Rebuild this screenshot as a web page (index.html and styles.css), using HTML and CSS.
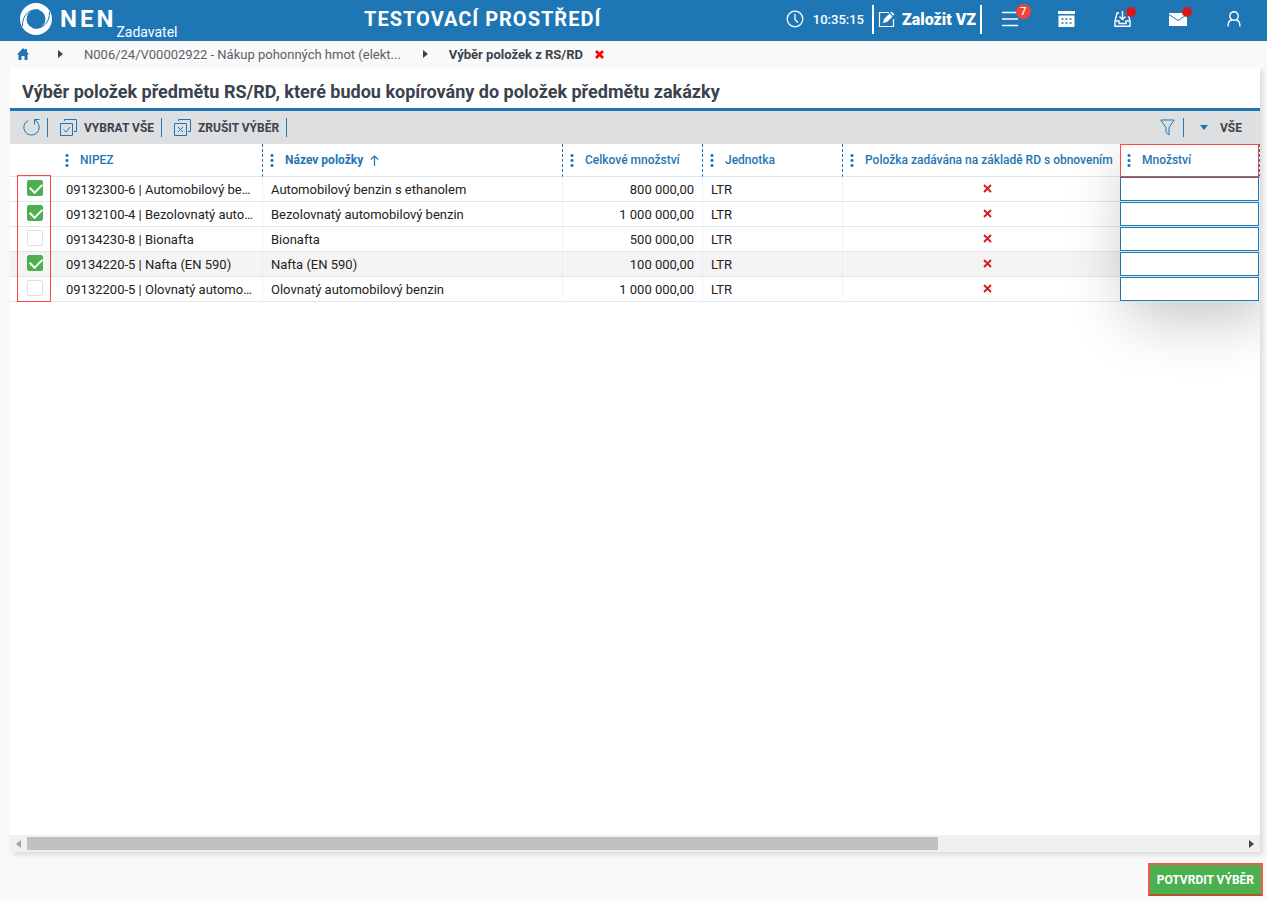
FILE: index.html
```html
<!DOCTYPE html>
<html lang="cs">
<head>
<meta charset="UTF-8" />
<meta name="viewport" content="width=device-width, initial-scale=1" />
<title>NEN - Výběr položek z RS/RD</title>
<link rel="stylesheet" href="styles.css">
</head>
<body>

<header class="topbar">
  <a class="brand" href="#">
    <svg class="brand-logo" width="32" height="32" viewBox="0 0 32 32">
      <path fill="#fff" fill-rule="evenodd" d="M16 0a16 16 0 1 1 0 32a16 16 0 1 1 0-32zM16 6.500a9.500 9.500 0 1 0 0 19a9.500 9.500 0 1 0 0-19z"/>
      <path fill="none" stroke="#1e76b5" stroke-width="1" d="M2.500 23C2 13 9 5 19 7M29.500 9C30 19 23 27 13 25"/>
    </svg>
    <span class="brand-name">NEN</span>
    <span class="brand-role">Zadavatel</span>
  </a>
  <div class="env">TESTOVACÍ PROSTŘEDÍ</div>
  <div class="clock">
    <svg width="18" height="18" viewBox="0 0 18 18" fill="none" stroke="#fff" stroke-width="1.3"><circle cx="9" cy="9" r="7.800"/><path d="M9 4v5.500l3 3"/></svg>
    <span>10:35:15</span>
  </div>
  <button class="create">
    <svg width="17" height="17" viewBox="0 0 17 17"><path fill="none" stroke="#fff" stroke-width="1.200" d="M11 1.500H1.500v14h14V8"/><path fill="#fff" d="M5 12l1-4 5.500-5.500 3 3L9 11zM12.300 1.700L13.500.5l3 3-1.200 1.200z"/></svg>
    Založit VZ
  </button>
  <nav class="icons">
    <button aria-label="Menu">
      <svg width="18" height="16" viewBox="0 0 18 16" stroke="#fff" stroke-width="1.600"><path d="M1 1.500h16M1 8h16M1 14.500h16"/></svg>
      <span class="badge">7</span>
    </button>
    <button aria-label="Kalendář">
      <svg width="17" height="16" viewBox="0 0 17 16"><path fill="#fff" d="M0 0h17v3H0zM.5 4.500h16V16H.5z"/><path stroke="#1e76b5" stroke-width="1.500" stroke-dasharray="2 2" d="M3.500 8h10M3.500 12h10"/></svg>
    </button>
    <button aria-label="Doručené">
      <svg width="17" height="16" viewBox="0 0 17 16" fill="none" stroke="#fff" stroke-width="1.400"><path d="M5 2H3L1 10v5.300h15V10l-2-8h-2M1 10h4v2.500h7V10h4M8.500 0v8M5.500 5.500l3 3 3-3"/></svg>
      <span class="dot"></span>
    </button>
    <button aria-label="Zprávy">
      <svg width="18" height="13" viewBox="0 0 18 13"><path fill="#fff" d="M0 0h18v13H0z"/><path fill="none" stroke="#1e76b5" d="M0 1.500l9 6 9-6"/></svg>
      <span class="dot"></span>
    </button>
    <button aria-label="Uživatel">
      <svg width="14" height="16" viewBox="0 0 14 16" fill="none" stroke="#fff" stroke-width="1.400"><circle cx="7" cy="5" r="4.200"/><path d="M1 15.500c0-4 2-6.300 4-6.700M13 15.500c0-4-2-6.300-4-6.700"/></svg>
    </button>
  </nav>
</header>

<nav class="crumbs">
  <a class="home" href="#" aria-label="Domů">
    <svg width="12" height="12" viewBox="0 0 12 12"><path fill="#1e76b5" d="M6 0l2 2V1h2v3l2 2.500h-1.500V12h-3V8h-3v4h-3V6.500H0z"/></svg>
  </a>
  <i class="arrow"></i>
  <a class="crumb" href="#">N006/24/V00002922 - Nákup pohonných hmot (elekt...</a>
  <i class="arrow"></i>
  <strong>Výběr položek z RS/RD</strong>
  <button class="close" aria-label="Zavřít">
    <svg width="9" height="9" viewBox="0 0 9 9"><path stroke="#f00" stroke-width="2.600" d="M1 1l7 7M8 1L1 8"/></svg>
  </button>
</nav>

<main class="panel">
  <h1>Výběr položek předmětu RS/RD, které budou kopírovány do položek předmětu zakázky</h1>

  <div class="toolbar">
    <button class="tool" aria-label="Obnovit">
      <svg width="17" height="17" viewBox="0 0 17 17" fill="none" stroke="#1e76b5"><path d="M5 1.500A7.700 7.700 0 1 0 13.500 2.500M16.500.5h-5v5M11.500.5l3 2.500"/></svg>
    </button>
    <button class="tool">
      <svg width="17" height="17" viewBox="0 0 17 17" fill="none" stroke="#1e76b5"><path d="M4.500 2V.5h12v12H14M.5 4.500h12v12H.500zM3.500 10.500l2.500 2.500 4-5"/></svg>
      VYBRAT VŠE
    </button>
    <button class="tool">
      <svg width="17" height="17" viewBox="0 0 17 17" fill="none" stroke="#1e76b5"><path d="M4.500 2V.5h12v12H14M.5 4.500h12v12H.500zM4 8l5 5M9 8l-5 5"/></svg>
      ZRUŠIT VÝBĚR
    </button>
    <button class="tool filter" aria-label="Filtr">
      <svg width="15" height="17" viewBox="0 0 15 17" fill="none" stroke="#1e76b5"><path d="M.8 1h13.400L9 8.500v7.500l-3-2.500v-5z"/></svg>
    </button>
    <button class="view"><i class="caret"></i>VŠE</button>
  </div>

  <div class="grid">
    <div class="grid-body">
      <table>
        <colgroup>
          <col class="c-check"><col class="c-nipez"><col class="c-name"><col class="c-total"><col class="c-unit"><col class="c-renew"><col class="c-qty">
        </colgroup>
        <thead>
          <tr>
            <th></th>
            <th><span class="head"><i class="dots"></i>NIPEZ</span></th>
            <th class="sorted"><span class="head"><i class="dots"></i>Název položky
              <svg width="9" height="11" viewBox="0 0 9 11" fill="none" stroke="#1e76b5" stroke-width="1.200"><path d="M4.500 11V1M.8 4.500L4.500 1l3.700 3.500"/></svg></span></th>
            <th><span class="head"><i class="dots"></i>Celkové množství</span></th>
            <th><span class="head"><i class="dots"></i>Jednotka</span></th>
            <th class="renew"><span class="head"><i class="dots"></i>Položka zadávána na základě RD s obnovením</span></th>
            <th class="qty"><span class="head"><i class="dots"></i>Množství</span><span class="mark"></span></th>
          </tr>
        </thead>
        <tbody id="items"></tbody>
      </table>
      <div class="pin-shadow"></div>
      <span class="mark mark-checks"></span>
    </div>
  </div>

  <div class="scroll">
    <button class="scroll-left" aria-label="Doleva"></button>
    <div class="track"><div class="thumb"></div></div>
    <button class="scroll-right" aria-label="Doprava"></button>
  </div>
</main>

<footer>
  <button class="confirm">POTVRDIT VÝBĚR</button>
</footer>

<script>
  const items = [
    { nipez: "09132300-6 | Automobilový be…", name: "Automobilový benzin s ethanolem", total: "800 000,00", checked: true },
    { nipez: "09132100-4 | Bezolovnatý auto…", name: "Bezolovnatý automobilový benzin", total: "1 000 000,00", checked: true },
    { nipez: "09134230-8 | Bionafta", name: "Bionafta", total: "500 000,00" },
    { nipez: "09134220-5 | Nafta (EN 590)", name: "Nafta (EN 590)", total: "100 000,00", checked: true, hover: true },
    { nipez: "09132200-5 | Olovnatý automo…", name: "Olovnatý automobilový benzin", total: "1 000 000,00" }
  ];

  const tbody = document.getElementById("items");
  items.forEach(item => {
    const tr = document.createElement("tr");
    if (item.hover) tr.className = "hover";
    tr.innerHTML = `
      <td class="check"><input type="checkbox" aria-label="Vybrat ${item.name}" ${item.checked ? "checked" : ""}></td>
      <td>${item.nipez}</td>
      <td>${item.name}</td>
      <td class="num">${item.total}</td>
      <td>LTR</td>
      <td class="renew"><svg width="9" height="9" viewBox="0 0 9 9"><path stroke="#d8181c" stroke-width="1.800" d="M1 1l7 7M8 1L1 8"/></svg></td>
      <td class="qty"><input type="text" aria-label="Množství ${item.name}"></td>`;
    tbody.appendChild(tr);
  });
</script>

</body>
</html>
```
FILE: styles.css
```css
* { box-sizing: border-box; }
body {
  margin: 0; min-height: 100vh; display: flex; flex-direction: column;
  font-family: Roboto, "Liberation Sans", sans-serif; font-size: 13px;
  color: #39434d; background: #f9f9f9;
}
button {
  font: inherit; color: inherit; background: none; border: none;
  padding: 0; margin: 0; cursor: pointer;
}
a { color: inherit; text-decoration: none; }
svg { display: block; flex: none; }

.topbar {
  height: 41px; background: #1e76b5; color: #fff; flex: none;
  display: flex; align-items: center; padding: 0 12px 3px 20px;
}
.brand { display: flex; align-items: center; width: 344px; height: 38px; }
.brand-name { font-size: 24px; font-weight: 700; letter-spacing: 3px; margin-left: 8px; }
.brand-role { font-size: 14px; align-self: flex-end; line-height: 12px; }
.env { font-size: 20px; font-weight: 700; letter-spacing: 1px; margin-right: auto; }
.clock { display: flex; align-items: center; gap: 9px; margin-right: 8px; font-weight: 500; }
.create {
  display: flex; align-items: center; gap: 7px; height: 29px; padding: 0 4px;
  border-left: 2px solid #fff; border-right: 2px solid #fff;
  font-size: 16px; font-weight: 900;
}
.icons { display: flex; }
.icons button {
  position: relative; width: 56px; height: 38px;
  display: flex; align-items: center; justify-content: center;
}
.icons button:last-child { margin-right: -7px; }
.badge {
  position: absolute; top: 4px; right: 7px; width: 15px; height: 15px;
  border-radius: 50%; background: #f44336; font-size: 11px; line-height: 15px; font-weight: 500;
}
.dot {
  position: absolute; top: 7px; right: 14px; width: 10px; height: 10px;
  border-radius: 50%; background: #d8181c;
}

.crumbs { display: flex; align-items: center; height: 26px; padding: 0 17px; flex: none; }
.crumb { margin: 0 22px 0 21px; color: #5a6068; }
.arrow {
  border: 4px solid transparent; border-left: 5px solid #39434d; border-right: none;
}
.home { margin-right: 29px; }
.crumbs strong { font-weight: 700; margin: 0 12px 0 21px; }

.panel {
  flex: 1; display: flex; flex-direction: column; margin: 0 7px 0 10px;
  background: #fff; box-shadow: 3px 3px 5px rgba(0,0,0,0.12);
}
h1 {
  margin: 0; padding: 9px 12px 0; height: 44px; font-size: 18px; line-height: 32px;
  font-weight: 700; border-bottom: 3px solid #1e76b5;
}
.toolbar {
  display: flex; align-items: center; height: 33px; padding: 0 18px 0 13px;
  background: #dedfe1; font-size: 12px; font-weight: 700;
}
.tool {
  display: flex; align-items: center; gap: 7px; height: 19px;
  padding-right: 7px; margin-right: 12px; border-right: 1px solid #1e76b5;
}
.filter { margin: 0 16px 0 auto; padding-right: 8px; }
.view { display: flex; align-items: center; gap: 12px; }
.caret { border: 4px solid transparent; border-top: 5px solid #1e76b5; border-bottom: none; }

.grid { flex: 1; overflow: hidden; }
.grid-body { position: relative; }
table { width: 100%; table-layout: fixed; border-collapse: separate; border-spacing: 0; }
.c-check { width: 48px; }
.c-nipez { width: 205px; }
.c-name { width: 300px; }
.c-total, .c-unit, .c-qty { width: 140px; }
th {
  height: 33px; padding: 0 0 0 7px; text-align: left; font-size: 12px; font-weight: 500;
  color: #1e76b5; border-right: 1px dashed #1e76b5; border-bottom: 1px solid #dde7ec;
}
th:first-child { border-right: none; }
.sorted { font-weight: 700; }
.head { display: flex; align-items: center; white-space: nowrap; }
.head svg { margin-left: 7px; }
.dots {
  width: 4px; height: 14px; margin-right: 11px;
  background: radial-gradient(circle, #1e76b5 1px, transparent 2px) 0 0 / 4px 5px;
}
td {
  height: 25px; padding: 0 8px; color: #222; white-space: nowrap;
  border-right: 1px dotted #dde7ec; border-bottom: 1px solid #dde7ec;
}
.check { padding: 0 0 0 17px; border-right: none; }
.num { text-align: right; }
.hover td { background: #f4f4f4; }
.renew { border-right: none; }
td.renew { padding-left: 19px; }
td.renew svg { margin: 0 auto 2px; }
td.qty { padding: 0; }
.qty { position: relative; z-index: 2; background: #fff; }
.qty input {
  display: block; width: 100%; height: 24px; padding: 0 8px; font: inherit;
  border: 1px solid #1e76b5; background: #fff;
}
.check input {
  appearance: none; display: block; width: 16px; height: 16px; margin: 0 0 2px;
  border: 1px solid #dedfe1; border-radius: 2px; background: #fff;
}
.check input:checked { background: #4caf50; border-color: #4caf50; }
.check input:checked::before {
  content: ""; display: block; width: 10px; height: 6px; margin: 2px 0 0 2px;
  border: solid #fff; border-width: 0 0 2px 2px; transform: rotate(-45deg);
}
.pin-shadow {
  position: absolute; z-index: 1; top: 0; right: 0; bottom: 0; width: 140px;
  box-shadow: 8px 16px 60px rgba(0,0,0,0.24);
}

/* red highlight frames */
.mark { position: absolute; inset: 0 0 -1px 0; border: 1px solid #f44; pointer-events: none; }
.mark-checks { z-index: 3; left: 7px; right: auto; top: 31px; bottom: 0; width: 34px; }

.scroll { display: flex; align-items: center; height: 17px; padding: 0 6px; background: #f0f0f0; }
.track { flex: 1; margin: 0 8px 0 6px; }
.thumb { width: 75%; height: 13px; background: #c1c1c1; }
.scroll-left { border: 4px solid transparent; border-left: none; border-right: 5px solid #a3a3a3; }
.scroll-right { border: 4px solid transparent; border-right: none; border-left: 5px solid #444; }

footer { display: flex; justify-content: flex-end; padding: 11px 4px 5px; flex: none; }
.confirm {
  height: 33px; padding: 0 7px; background: #4caf50; color: #fff;
  font-size: 12px; font-weight: 700; border: 2px solid #f05a50; border-bottom-color: #a95a28;
}
```
